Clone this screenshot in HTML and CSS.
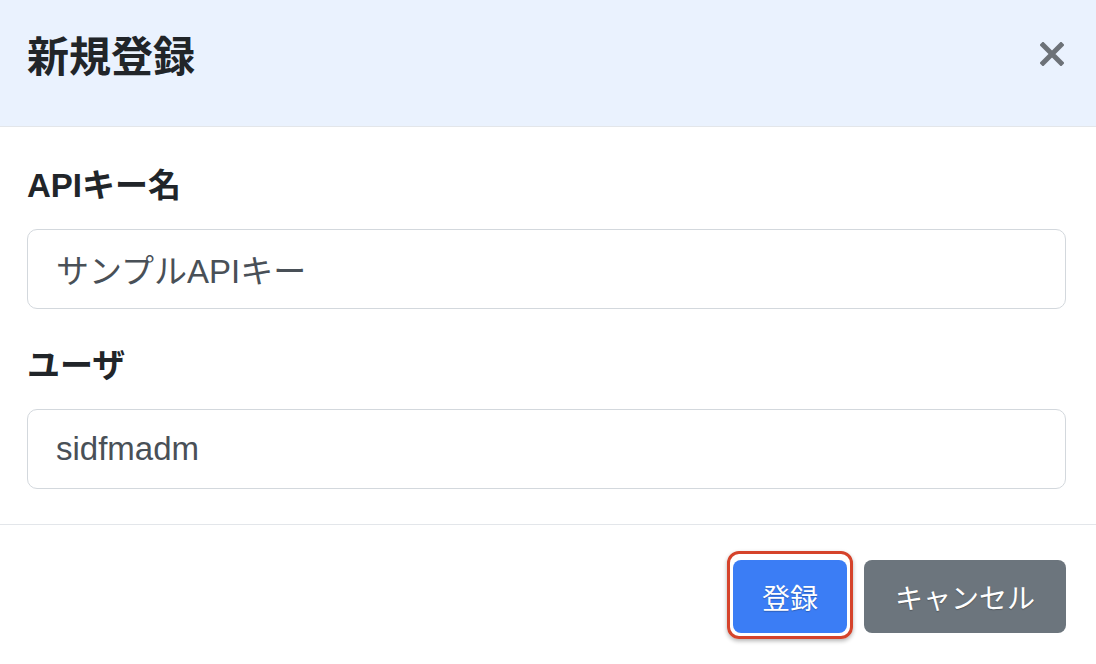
FILE: index.html
```html
<!DOCTYPE html>
<html lang="ja">
<head>
<meta charset="utf-8">
<title>新規登録</title>
<link rel="stylesheet" href="styles.css">
</head>
<body>
<div class="modal">
  <div class="modal-header">
    <h5 class="modal-title">新規登録</h5>
    <button class="close" type="button" aria-label="Close">
      <svg width="24" height="24" viewBox="0 0 24 24"><path d="M3 3 L21 21 M21 3 L3 21" stroke="#6d7278" stroke-width="5" stroke-linecap="square"/></svg>
    </button>
  </div>
  <div class="modal-body">
    <div class="form-group">
      <label class="form-label">APIキー名</label>
      <div class="form-control">サンプルAPIキー</div>
    </div>
    <div class="form-group last">
      <label class="form-label">ユーザ</label>
      <div class="form-control">sidfmadm</div>
    </div>
  </div>
  <div class="modal-footer">
    <button class="btn btn-primary" type="button">登録</button>
    <button class="btn btn-secondary" type="button">キャンセル</button>
  </div>
</div>
</body>
</html>
```
FILE: styles.css
```css
html, body {
  margin: 0;
  padding: 0;
  background: #ffffff;
}
body {
  font-family: "Liberation Sans", "Noto Sans CJK JP", sans-serif;
  color: #212529;
  width: 1096px;
  height: 664px;
  overflow: hidden;
}
.modal {
  width: 1096px;
}
.modal-header {
  box-sizing: border-box;
  height: 127px;
  background: #eaf2fe;
  border-bottom: 1px solid #e3e6ea;
  display: flex;
  align-items: center;
  justify-content: space-between;
  padding: 0 30px 18px 27px;
}
.modal-title {
  margin: 0;
  font-size: 42px;
  font-weight: bold;
  line-height: 1;
  color: #212529;
  font-family: "Noto Sans CJK JP", sans-serif;
}
.close {
  border: none;
  background: transparent;
  padding: 0;
  width: 28px;
  height: 28px;
  display: flex;
  align-items: center;
  justify-content: center;
  margin-right: 0;
}
.modal-body {
  padding: 34px 30px 35px 27px;
}
.form-group {
  margin-bottom: 32px;
}
.form-group.last {
  margin-bottom: 0;
}
.form-label {
  display: block;
  font-size: 33px;
  font-weight: bold;
  line-height: 50px;
  margin-bottom: 18px;
}
.form-control {
  box-sizing: border-box;
  height: 80px;
  border: 1.5px solid #d3d8dd;
  border-radius: 10px;
  padding: 0 28px;
  display: flex;
  align-items: center;
  font-size: 33px;
  color: #495057;
}
.modal-footer {
  border-top: 1px solid #e3e6ea;
  display: flex;
  justify-content: flex-end;
  gap: 17px;
  padding: 35px 30px 0 27px;
}
.btn {
  position: relative;
  height: 73px;
  border: none;
  border-radius: 8px;
  padding: 0 29px;
  font-family: "Noto Sans CJK JP", sans-serif;
  font-size: 28px;
  color: #ffffff;
  text-shadow: 0 1px 1px rgba(0,0,0,0.25);
}
.btn-primary {
  background: #3b7df5;
  width: 114px;
}
.btn-secondary {
  background: #6c757d;
  width: 202px;
}
.btn-primary::after {
  content: "";
  position: absolute;
  top: -9px;
  left: -6px;
  right: -6px;
  bottom: -6px;
  border: 3px solid #d5432b;
  border-radius: 12px;
  box-shadow: 0 2px 4px rgba(0,0,0,0.3);
}
```
